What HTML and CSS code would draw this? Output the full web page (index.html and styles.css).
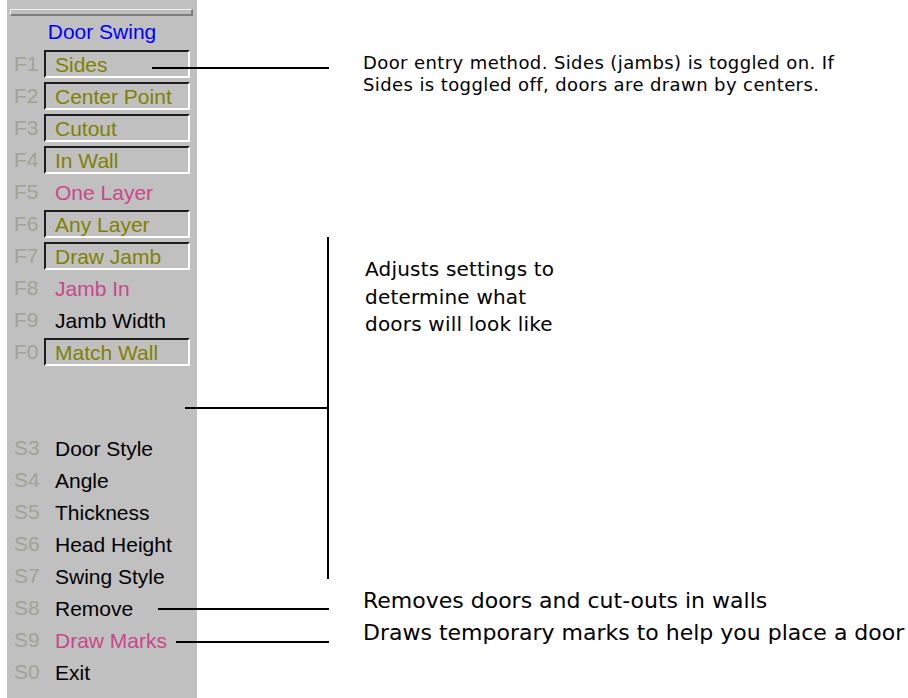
FILE: index.html
```html
<!DOCTYPE html>
<html lang="en">

<head>
  <meta charset="UTF-8">
  <title>Door Swing</title>
  <link rel="stylesheet" href="styles.css">
</head>

<body>
  <div class="sheet">
    <!-- menu panel -->
    <div class="panel">
      <div class="grip"></div>
      <div class="title">Door Swing</div>
      <ul class="keys">
        <li class="key"><span class="fn">F1</span><span class="opt box">Sides</span></li>
        <li class="key"><span class="fn">F2</span><span class="opt box">Center Point</span></li>
        <li class="key"><span class="fn">F3</span><span class="opt box">Cutout</span></li>
        <li class="key"><span class="fn">F4</span><span class="opt box">In Wall</span></li>
        <li class="key"><span class="fn">F5</span><span class="opt pink">One Layer</span></li>
        <li class="key"><span class="fn">F6</span><span class="opt box">Any Layer</span></li>
        <li class="key"><span class="fn">F7</span><span class="opt box">Draw Jamb</span></li>
        <li class="key"><span class="fn">F8</span><span class="opt pink">Jamb In</span></li>
        <li class="key"><span class="fn">F9</span><span class="opt">Jamb Width</span></li>
        <li class="key"><span class="fn">F0</span><span class="opt box">Match Wall</span></li>
        <li class="key"></li>
        <li class="key"></li>
        <li class="key"><span class="fn">S3</span><span class="opt">Door Style</span></li>
        <li class="key"><span class="fn">S4</span><span class="opt">Angle</span></li>
        <li class="key"><span class="fn">S5</span><span class="opt">Thickness</span></li>
        <li class="key"><span class="fn">S6</span><span class="opt">Head Height</span></li>
        <li class="key"><span class="fn">S7</span><span class="opt">Swing Style</span></li>
        <li class="key"><span class="fn">S8</span><span class="opt">Remove</span></li>
        <li class="key"><span class="fn">S9</span><span class="opt pink">Draw Marks</span></li>
        <li class="key"><span class="fn">S0</span><span class="opt">Exit</span></li>
      </ul>
    </div>

    <!-- callouts -->
    <div class="lead" style="left:152px;top:67px;width:177px"></div>
    <p class="note note-entry">Door entry method. Sides (jambs) is toggled on. If<br>Sides is toggled off, doors are drawn by centers.</p>

    <div class="lead" style="left:185px;top:407px;width:144px"></div>
    <div class="lead vert" style="left:327px;top:237px;height:342px"></div>
    <p class="note note-settings">Adjusts settings to<br>determine what<br>doors will look like</p>

    <div class="lead" style="left:158px;top:608px;width:171px"></div>
    <p class="note note-remove">Removes doors and cut-outs in walls</p>

    <div class="lead" style="left:176px;top:641px;width:153px"></div>
    <p class="note note-marks">Draws temporary marks to help you place a door</p>
  </div>
</body>

</html>
```

FILE: styles.css
```css
* {
  margin: 0;
  padding: 0;
}

body {
  background-color: #fff;
}

.sheet {
  position: relative;
  height: 698px;
  overflow: hidden;
}

/*左側選單*/
.panel {
  width: 190px;
  height: 698px;
  margin-left: 7px;
  padding: 9px 7px 0 7px;
  box-sizing: border-box;
  background-color: #c0c0c0;
  font-family: "Liberation Sans", Arial, sans-serif;
  font-size: 21px;
}

.grip {
  height: 7px;
  margin: 0 -3px 0 -4px;
  box-sizing: border-box;
  border-top: 1px solid #f0f0f0;
  border-left: 1px solid #f0f0f0;
  border-bottom: 2px solid #7c7c7c;
  border-right: 2px solid #7c7c7c;
  background-color: #bdbdbd;
}

.title {
  height: 32px;
  line-height: 32px;
  text-align: center;
  color: #0000ff;
}

.keys {
  list-style: none;
}

.key {
  display: flex;
  align-items: center;
  height: 32px;
}

.fn {
  width: 30px;
  color: #a2a393;
}

.opt {
  flex: 1;
  height: 28px;
  box-sizing: border-box;
  border: 2px solid transparent;
  padding: 1px 0 0 9px;
  line-height: 24px;
  color: #000;
  white-space: nowrap;
}

.opt.box {
  border-color: #1e1e1e #fff #fff #1e1e1e;
  color: #808000;
}

.opt.pink {
  color: #c8488a;
}

/*說明線*/
.lead {
  position: absolute;
  height: 2px;
  background-color: #000;
}

.lead.vert {
  width: 2px;
}

.note {
  position: absolute;
  font-family: "DejaVu Sans", Verdana, sans-serif;
  color: #000;
  white-space: nowrap;
}

.note-entry {
  left: 363px;
  top: 52px;
  font-size: 18px;
  letter-spacing: 0.4px;
  line-height: 22px;
}

.note-settings {
  left: 365px;
  top: 256px;
  font-size: 20px;
  letter-spacing: 0.2px;
  line-height: 27.5px;
}

.note-remove,
.note-marks {
  left: 363px;
  font-size: 22px;
  line-height: 26px;
}

.note-remove {
  top: 588px;
}

.note-marks {
  top: 620px;
}
```
